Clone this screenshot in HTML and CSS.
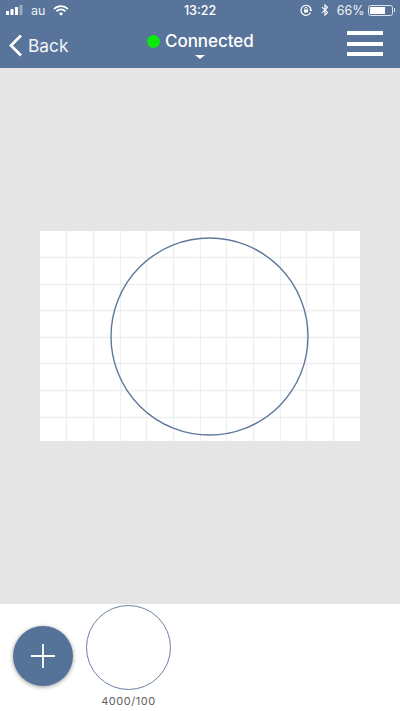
FILE: index.html
```html
<!DOCTYPE html>
<html lang="en">
<head>
<meta charset="utf-8">
<title>Connected</title>
<link rel="stylesheet" href="styles.css">
</head>
<body>
<div class="app">
  <header class="header">
    <div class="status">
      <div class="status-left">
        <svg class="signal" width="17" height="10" viewBox="0 0 17 10"><rect x="0" y="6" width="3" height="4" fill="#fff"/><rect x="4.500" y="4" width="3" height="6" fill="#fff"/><rect x="9" y="2" width="3" height="8" fill="#fff"/><rect x="13.500" y="0" width="3" height="10" fill="#fff" opacity=".4"/></svg>
        <span class="carrier">au</span>
        <svg class="wifi" width="16" height="11" viewBox="0 0 16 11" fill="none" stroke="#fff" stroke-width="1.700"><path d="M1 4a10 10 0 0 1 14 0"/><path d="M3.500 6.300a6.400 6.400 0 0 1 9 0"/><path d="M8 10.800 5.900 8.600a3 3 0 0 1 4.200 0z" fill="#fff" stroke="none"/></svg>
      </div>
      <div class="time">13:22</div>
      <div class="status-right">
        <svg width="12" height="12" viewBox="0 0 12 12" fill="none" stroke="#fff" stroke-width="1.200"><path d="M10.500 8.500A5 5 0 1 1 11 6"/><path d="M9.500 5.500 11 7l1-1.500" stroke-width="1"/><rect x="4" y="5.500" width="4" height="3" fill="#fff" stroke="none"/><path d="M4.800 5.500V4.500a1.200 1.200 0 0 1 2.400 0v1" stroke-width=".9"/></svg>
        <svg class="bt" width="8" height="12" viewBox="0 0 8 12" fill="none" stroke="#fff" stroke-width="1.100"><path d="M1 3.200 6.600 8.400 4 11V1l2.600 2.600L1 8.800"/></svg>
        <span class="percent">66%</span>
        <div class="battery"><div class="battery-fill"></div></div>
        <div class="battery-tip"></div>
      </div>
    </div>
    <div class="nav">
      <div class="back">
        <svg width="15" height="23" viewBox="0 0 15 23" fill="none" stroke="#fff" stroke-width="2.800"><path d="M13 1.500 3 11.500 13 21.500"/></svg>
        <span>Back</span>
      </div>
      <div class="title">
        <div class="title-row"><span class="dot"></span><span class="title-text">Connected</span></div>
        <div class="caret"></div>
      </div>
      <div class="menu"><span></span><span></span><span></span></div>
    </div>
  </header>
  <main class="stage">
    <svg class="canvas" width="320" height="210" viewBox="0 0 320 210">
      <g stroke="#eeeff0" stroke-width="1.300">
        <path d="M26.500 0V210M53.500 0V210M80.500 0V210M106.500 0V210M133.500 0V210M160.500 0V210M186.500 0V210M213.500 0V210M240.500 0V210M266.500 0V210M293.500 0V210"/>
        <path d="M0 26.500H320M0 53.500H320M0 79.500H320M0 106.500H320M0 132.500H320M0 159.500H320M0 186.500H320"/>
      </g>
      <circle cx="169.500" cy="105.500" r="98.500" fill="none" stroke="#5f7899" stroke-width="1.400"/>
    </svg>
  </main>
  <footer class="tray">
    <button class="add">
      <svg width="24" height="24" viewBox="0 0 24 24" stroke="#fff" stroke-width="1.800"><path d="M12 0V24M0 12H24"/></svg>
    </button>
    <div class="thumb">
      <div class="thumb-circle"></div>
      <div class="thumb-label">4000/100</div>
    </div>
  </footer>
</div>
</body>
</html>
```
FILE: styles.css
```css
* { box-sizing: border-box; }
html, body { margin: 0; padding: 0; }
body { font-family: "Inter", "Liberation Sans", sans-serif; }
.app { width: 400px; height: 711px; display: flex; flex-direction: column; background: #fff; overflow: hidden; }
.header { height: 68px; background: #58749a; color: #fff; flex: none; }
.status { height: 20px; padding: 0 6px 0 6px; display: flex; align-items: center; justify-content: space-between; position: relative; }
.status-left { display: flex; align-items: center; gap: 9px; }
.carrier { font-size: 12.500px; margin-left: -1px; margin-right: -1px; color: #eef2f7; }
.time { position: absolute; left: 0; right: 0; text-align: center; font-size: 12.500px; font-weight: 500; }
.status-right { display: flex; align-items: center; gap: 0; margin-right: -1px; }
.bt { margin-left: 9px; }
.percent { font-size: 12.500px; margin-left: 8px; color: #eef2f7; }
.battery { width: 25px; height: 11px; border: 1px solid #dfe5ee; border-radius: 2.500px; padding: 1px; margin-left: 3px; }
.battery-fill { width: 15px; height: 100%; background: #fff; }
.battery-tip { width: 1.500px; height: 4px; background: #dfe5ee; margin-left: 1px; }
.nav { height: 48px; position: relative; display: flex; align-items: center; justify-content: space-between; padding: 0 17px 0 8px; }
.back { display: flex; align-items: center; gap: 5px; font-size: 17.300px; color: #f2f4f8; margin-top: 2px; }
.title { position: absolute; left: 147px; top: 6px; display: flex; flex-direction: column; align-items: center; }
.title-row { display: flex; align-items: center; gap: 5px; }
.dot { width: 13px; height: 13px; border-radius: 50%; background: #0be80b; }
.title-text { font-size: 17px; font-weight: 500; line-height: 31px; letter-spacing: -.05px; }
.caret { width: 0; height: 0; border-left: 5px solid transparent; border-right: 5px solid transparent; border-top: 4px solid #fff; margin-top: -2px; }
.menu { width: 36px; height: 25px; display: flex; flex-direction: column; justify-content: space-between; margin-top: -1px; }
.menu span { height: 4px; background: #fff; }
.stage { flex: 1; background: #e5e5e5; display: flex; align-items: center; justify-content: center; }
.canvas { background: #fff; display: block; }
.tray { height: 107px; flex: none; display: flex; align-items: flex-start; padding: 1px 0 0 13px; gap: 13px; background: #fff; }
.add { width: 60px; height: 60px; margin-top: 21px; border: 0; padding: 0; border-radius: 50%; background: #557399; box-shadow: 0 1px 4px rgba(0,0,0,.4); display: flex; align-items: center; justify-content: center; }
.thumb { display: flex; flex-direction: column; align-items: center; }
.thumb-circle { width: 85px; height: 85px; border-radius: 50%; border: 1px solid #6a82a2; }
.thumb-label { font-size: 11px; color: #606060; margin-top: 4px; letter-spacing: .55px; }
```
